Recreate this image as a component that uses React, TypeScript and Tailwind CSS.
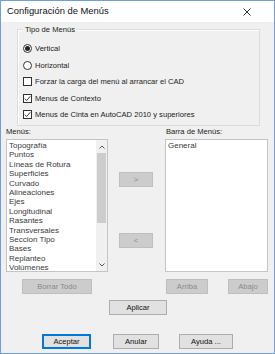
import React from 'react';

const font = { fontFamily: '"Liberation Sans", Arial, sans-serif' };

const menus = [
  'Topografía',
  'Puntos',
  'Líneas de Rotura',
  'Superficies',
  'Curvado',
  'Alineaciones',
  'Ejes',
  'Longitudinal',
  'Rasantes',
  'Transversales',
  'Seccion Tipo',
  'Bases',
  'Replanteo',
  'Volúmenes',
];

function Radio({ checked, label }: { checked?: boolean; label: string }) {
  return (
    <div className="flex items-center gap-[3px]">
      <span className="w-[9px] h-[9px] rounded-full border border-[#333] bg-white flex items-center justify-center">
        {checked && <span className="w-[5px] h-[5px] rounded-full bg-[#222]" />}
      </span>
      <span>{label}</span>
    </div>
  );
}

function Check({ checked, label }: { checked?: boolean; label: string }) {
  return (
    <div className="flex items-center gap-[3px]">
      <span className="w-[9px] h-[9px] border border-[#333] bg-white flex items-center justify-center">
        {checked && (
          <svg width="7" height="7" viewBox="0 0 7 7">
            <path d="M0.8 3.6 L2.7 5.5 L6.3 1.2" fill="none" stroke="#222" strokeWidth="0.9" />
          </svg>
        )}
      </span>
      <span>{label}</span>
    </div>
  );
}

function Btn({
  children,
  disabled,
  primary,
  className,
}: {
  children: React.ReactNode;
  disabled?: boolean;
  primary?: boolean;
  className: string;
}) {
  const look = disabled
    ? 'bg-[#cccccc] border-[#bfbfbf] text-[#8a8a8a]'
    : primary
      ? 'bg-[#e1e1e1] border-[#0078d7] border-2 text-[#111]'
      : 'bg-[#e1e1e1] border-[#adadad] text-[#111]';
  return (
    <div className={`h-[15px] border flex items-center justify-center leading-none ${look} ${className}`}>
      {children}
    </div>
  );
}

export default function App() {
  return (
    <div
      style={font}
      className="w-[275px] h-[354px] border border-[#6f9fd6] bg-[#f0f0f0] flex flex-col text-[7.6px] text-[#222] overflow-hidden"
    >
      {/* title bar */}
      <div className="h-[21px] bg-white flex items-center justify-between pl-[6px] pr-[23px] shrink-0">
        <span className="text-[9.4px] text-[#111]">Configuración de Menús</span>
        <svg width="8" height="8" viewBox="0 0 8 8">
          <path d="M0.5 0.5 L7.5 7.5 M7.5 0.5 L0.5 7.5" stroke="#333" strokeWidth="1" />
        </svg>
      </div>

      {/* Tipo de Menús group */}
      <div className="mt-[7px] ml-[16px] w-[243px] h-[97px] border border-[#dcdcdc] shadow-[inset_1px_1px_0_#ffffff] flex flex-col">
        <span className="-mt-[6px] ml-[5px] px-[2px] self-start bg-[#f0f0f0] leading-[11px]">Tipo de Menús</span>
        <div className="mt-[5px] pl-[5px] flex flex-col">
          <div className="h-[17px] flex items-center">
            <Radio checked label="Vertical" />
          </div>
          <div className="h-[17px] flex items-center">
            <Radio label="Horizontal" />
          </div>
          <div className="h-[16px] flex items-center">
            <Check label="Forzar la carga del menú al arrancar el CAD" />
          </div>
          <div className="h-[17px] flex items-center">
            <Check checked label="Menus de Contexto" />
          </div>
          <div className="h-[16px] flex items-center">
            <Check checked label="Menus de Cinta en AutoCAD 2010 y superiores" />
          </div>
        </div>
      </div>

      {/* list labels */}
      <div className="h-[11px] flex items-center">
        <span className="ml-[5px] w-[160px]">Menús:</span>
        <span>Barra de Menús:</span>
      </div>

      {/* lists */}
      <div className="mt-[2px] flex">
        <div className="ml-[5px] w-[102px] h-[133px] border border-[#c2c4c8] bg-white flex">
          <div className="flex-1 pl-[2px] pt-[1px] flex flex-col text-[8px] leading-[9.4px] text-[#3a3a3a] overflow-hidden">
            {menus.map((m) => (
              <span key={m}>{m}</span>
            ))}
          </div>
          <div className="w-[11px] bg-[#f0f0f0] flex flex-col items-center">
            <div className="h-[13px] flex items-center justify-center">
              <svg width="6" height="4" viewBox="0 0 6 4">
                <path d="M0.5 3.5 L3 1 L5.5 3.5" fill="none" stroke="#555" strokeWidth="1" />
              </svg>
            </div>
            <div className="w-[9px] h-[70px] bg-[#cdcdcd]" />
            <div className="flex-1" />
            <div className="h-[13px] flex items-center justify-center">
              <svg width="6" height="4" viewBox="0 0 6 4">
                <path d="M0.5 0.5 L3 3 L5.5 0.5" fill="none" stroke="#555" strokeWidth="1" />
              </svg>
            </div>
          </div>
        </div>

        <div className="ml-[11px] w-[34px] flex flex-col">
          <Btn disabled className="mt-[33px] w-[34px]">
            &gt;
          </Btn>
          <Btn disabled className="mt-[46px] w-[34px]">
            &lt;
          </Btn>
        </div>

        <div className="ml-[12px] w-[103px] h-[133px] border border-[#c2c4c8] bg-white pl-[2px] pt-[1px] text-[8px] leading-[9.4px] text-[#3a3a3a]">
          General
        </div>
      </div>

      {/* list buttons */}
      <div className="mt-[7px] flex">
        <Btn disabled className="ml-[21px] w-[70px]">
          Borrar Todo
        </Btn>
        <Btn disabled className="ml-[74px] w-[42px]">
          Arriba
        </Btn>
        <Btn disabled className="ml-[20px] w-[40px]">
          Abajo
        </Btn>
      </div>

      <div className="mt-[6px] flex">
        <Btn className="ml-[108px] w-[58px]">Aplicar</Btn>
      </div>

      {/* dialog buttons */}
      <div className="mt-[19px] flex">
        <Btn primary className="ml-[41px] w-[49px]">
          Aceptar
        </Btn>
        <Btn className="ml-[22px] w-[46px]">Anular</Btn>
        <Btn className="ml-[20px] w-[54px]">Ayuda ...</Btn>
      </div>
    </div>
  );
}
